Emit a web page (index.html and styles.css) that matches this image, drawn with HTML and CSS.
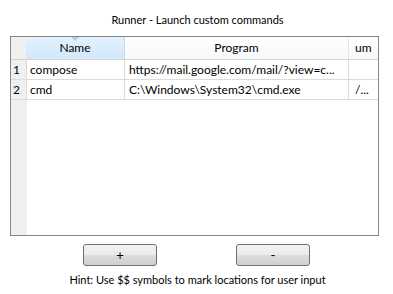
FILE: index.html
```html
<!DOCTYPE html>
<html>
<head>
<meta charset="utf-8">
<link rel="stylesheet" href="styles.css">
</head>
<body>
<div class="dialog">
  <div class="title">Runner - Launch custom commands</div>
  <div class="grid">
    <div class="row header">
      <div class="cell rn corner"></div>
      <div class="cell name sorted"><span class="sort"></span>Name</div>
      <div class="cell prog">Program</div>
      <div class="cell args">um</div>
    </div>
    <div class="row">
      <div class="cell rn">1</div>
      <div class="cell name">compose</div>
      <div class="cell prog">https://mail.google.com/mail/?view=c...</div>
      <div class="cell args"></div>
    </div>
    <div class="row">
      <div class="cell rn">2</div>
      <div class="cell name">cmd</div>
      <div class="cell prog">C:\Windows\System32\cmd.exe</div>
      <div class="cell args">/...</div>
    </div>
    <div class="filler"><div class="rn-fill"></div></div>
  </div>
  <div class="buttons">
    <button class="btn">+</button>
    <button class="btn">-</button>
  </div>
  <div class="hint">Hint: Use $$ symbols to mark locations for user input</div>
</div>
</body>
</html>
```

FILE: styles.css
```css
html, body {
  margin: 0;
  padding: 0;
  background: #ffffff;
}
body {
  font-family: "Segoe UI", Lato, "Noto Sans", sans-serif;
  font-size: 12px;
  color: #000;
  width: 393px;
  height: 294px;
  overflow: hidden;
}
.dialog {
  display: flex;
  flex-direction: column;
}
.title {
  height: 36px;
  line-height: 39px;
  text-align: center;
  padding-left: 2px;
  font-size: 11px;
}
.grid {
  margin-left: 10px;
  width: 367px;
  height: 198px;
  border: 1px solid #828790;
  display: flex;
  flex-direction: column;
  overflow: hidden;
}
.row {
  display: grid;
  grid-template-columns: 15px 99px 224px 1fr;
  height: 20px;
  border-bottom: 1px solid #dcdcdc;
  box-sizing: border-box;
  flex: none;
}
.row.header {
  height: 23px;
  border-bottom: 1px solid #d5d5d5;
  background: linear-gradient(#ffffff, #f7f8fa);
}
.cell {
  border-right: 1px solid #dcdcdc;
  white-space: nowrap;
  overflow: hidden;
  line-height: 19px;
  padding-left: 4px;
  position: relative;
}
.cell.args {
  border-right: none;
  padding-left: 6px;
}
.cell.rn {
  background: #f0f0f0;
  padding-left: 2px;
  border-right: 1px solid #dcdcdc;
  width: 16px;
  box-sizing: border-box;
}
.header .cell {
  text-align: center;
  line-height: 22px;
  padding-left: 0;
  border-right: 1px solid #e3e6ea;
}
.header .cell.rn {
  background: #f0f0f0;
}
.header .cell.sorted {
  background: linear-gradient(#e3f1fc, #d2e8fb);
  border-right: 1px solid #c5dcf0;
}
.header .cell.args {
  text-align: left;
  padding-left: 6px;
  border-right: none;
}
.sort {
  position: absolute;
  left: 50%;
  top: 0;
  margin-left: -4px;
  width: 0;
  height: 0;
  border-left: 4px solid transparent;
  border-right: 4px solid transparent;
  border-top: 4px solid #b4cde3;
}
.filler {
  flex: 1;
  display: flex;
}
.rn-fill {
  width: 16px;
  background: #f0f0f0;
}
.buttons {
  display: flex;
  justify-content: center;
  gap: 79px;
  margin-top: 8px;
}
.btn {
  width: 74px;
  height: 22px;
  border: 1px solid #707070;
  border-radius: 3px;
  background: linear-gradient(#f2f2f2 0%, #ebebeb 50%, #dddddd 51%, #cfcfcf 100%);
  font-family: "Segoe UI", Lato, "Noto Sans", sans-serif;
  font-size: 13px;
  color: #000;
  padding: 0;
  line-height: 20px;
}
.hint {
  text-align: center;
  margin-top: 7px;
  padding-left: 2px;
  font-size: 11px;
}
```
